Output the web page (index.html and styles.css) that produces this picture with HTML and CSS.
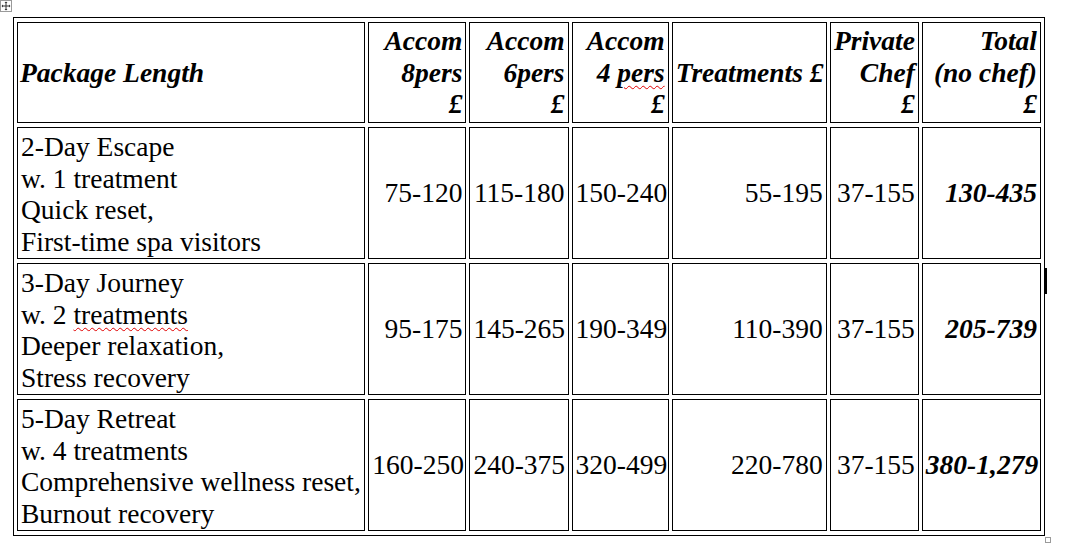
FILE: index.html
```html
<!DOCTYPE html>
<html>
<head>
<meta charset="utf-8">
<link rel="stylesheet" href="styles.css">
</head>
<body>
<div class="page">
  <svg class="move-handle" width="12" height="12" viewBox="0 0 12 12">
    <rect x="0.5" y="0.5" width="11" height="11" fill="#fff" stroke="#9a9a9a"/>
    <path d="M6 2v8M2 6h8" stroke="#333" stroke-width="1" fill="none"/>
    <path d="M6 1.5l-1.5 1.5h3z M6 10.5l-1.5-1.5h3z M1.5 6l1.5-1.5v3z M10.5 6l-1.5-1.5v3z" fill="#333"/>
  </svg>
  <table class="pkg">
    <thead>
      <tr>
        <th class="c1 left">Package Length</th>
        <th class="c2">Accom<br>8pers<br>£</th>
        <th class="c3">Accom<br>6pers<br>£</th>
        <th class="c4">Accom<br>4 <span class="spell">pers</span><br>£</th>
        <th class="c5">Treatments £</th>
        <th class="c6">Private<br>Chef<br>£</th>
        <th class="c7">Total<br>(no chef)<br>£</th>
      </tr>
    </thead>
    <tbody>
      <tr>
        <td class="desc">2-Day Escape<br>w. 1 treatment<br>Quick reset,<br>First-time spa visitors</td>
        <td>75-120</td>
        <td>115-180</td>
        <td class="lft">150-240</td>
        <td>55-195</td>
        <td>37-155</td>
        <td class="total">130-435</td>
      </tr>
      <tr>
        <td class="desc">3-Day Journey<br>w. 2 <span class="spell">treatments</span><br>Deeper relaxation,<br>Stress recovery</td>
        <td>95-175</td>
        <td>145-265</td>
        <td class="lft">190-349</td>
        <td>110-390</td>
        <td>37-155</td>
        <td class="total">205-739</td>
      </tr>
      <tr>
        <td class="desc">5-Day Retreat<br>w. 4 treatments<br>Comprehensive wellness reset,<br>Burnout recovery</td>
        <td>160-250</td>
        <td>240-375</td>
        <td class="lft">320-499</td>
        <td>220-780</td>
        <td>37-155</td>
        <td class="total">380-1,279</td>
      </tr>
    </tbody>
  </table>
  <div class="cursor"></div>
  <div class="resize-handle"></div>
</div>
</body>
</html>
```
FILE: styles.css
```css
html, body {
  margin: 0;
  padding: 0;
  background: #fff;
}
.page {
  position: relative;
  width: 1066px;
  height: 558px;
  padding: 17px 0 0 13px;
  box-sizing: border-box;
}
.move-handle {
  position: absolute;
  left: 0;
  top: 0;
}
.pkg {
  width: 1032px;
  table-layout: fixed;
  border-collapse: separate;
  border-spacing: 3px 4px;
  border: 1px solid #000;
  font-family: "Liberation Serif", "Times New Roman", serif;
  font-size: 27.5px;
  line-height: 31.5px;
  color: #000;
}
.pkg th, .pkg td {
  border: 1px solid #000;
  padding: 2px 3px;
  box-sizing: border-box;
  vertical-align: middle;
  text-align: right;
  overflow: visible;
  white-space: nowrap;
}
.pkg th {
  font-weight: bold;
  font-style: italic;
  height: 101px;
}
.pkg td {
  height: 132px;
}
.pkg th.left { text-align: left; padding-left: 2px; }
.pkg td.desc {
  text-align: left;
  vertical-align: top;
  padding: 3px 3px 1px 3px;
}
.pkg td.lft { text-align: left; }
.pkg td.total {
  font-weight: bold;
  font-style: italic;
}
.c1 { width: 348px; }
.c2 { width: 98px; }
.c3 { width: 99px; }
.c4 { width: 97px; }
.c5 { width: 155px; }
.c6 { width: 89px; }
.c7 { width: 119px; }
.spell {
  text-decoration: underline wavy #e00000;
  text-decoration-thickness: 1px;
  text-underline-offset: 3px;
}
.cursor {
  position: absolute;
  left: 1044px;
  top: 268px;
  width: 3px;
  height: 26px;
  background: #000;
}
.resize-handle {
  position: absolute;
  left: 1045px;
  top: 537px;
  width: 6px;
  height: 6px;
  border: 1px solid #9a9a9a;
  box-sizing: border-box;
}
```
